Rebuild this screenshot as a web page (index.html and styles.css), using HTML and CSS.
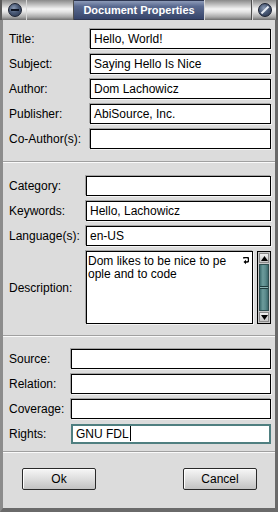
FILE: index.html
```html
<!DOCTYPE html>
<html lang="en">
<head>
  <meta charset="UTF-8">
  <title>Document Properties</title>
  <link rel="stylesheet" href="styles.css">
</head>
<body>
  <div class="window">
    <!-- Title bar -->
    <div class="titlebar">
      <div class="tb-cell tb-left">
        <span class="tb-button"><span class="tb-minus"></span></span>
      </div>
      <div class="tb-cell tb-fill"></div>
      <div class="tb-title">Document Properties</div>
      <div class="tb-cell tb-fill tb-fill-right"></div>
      <div class="tb-cell tb-right">
        <span class="tb-button"><span class="tb-slash"></span></span>
      </div>
    </div>

    <div class="content">
      <!-- General -->
      <div class="section section-general">
        <span class="label">Title:</span>
        <div class="field">Hello, World!</div>
        <span class="label">Subject:</span>
        <div class="field">Saying Hello Is Nice</div>
        <span class="label">Author:</span>
        <div class="field">Dom Lachowicz</div>
        <span class="label">Publisher:</span>
        <div class="field">AbiSource, Inc.</div>
        <span class="label">Co-Author(s):</span>
        <div class="field"></div>
      </div>

      <div class="separator"></div>

      <!-- Summary -->
      <div class="section section-summary">
        <span class="label">Category:</span>
        <div class="field"></div>
        <span class="label">Keywords:</span>
        <div class="field">Hello, Lachowicz</div>
        <span class="label">Language(s):</span>
        <div class="field">en-US</div>
        <span class="label">Description:</span>
        <div class="description">
          <div class="textarea">
            <div class="text-line">
              <span>Dom likes to be nice to pe</span>
              <svg class="wrap-mark" viewBox="0 0 6 8" width="6" height="8">
                <path d="M0.5 1.5 Q0.5 0.5 2.5 0.5 L4 0.5 Q5.5 0.5 5.5 2 L5.5 3.5 Q5.5 5 4 5 L2.5 5" fill="none" stroke="#000" stroke-width="1.4"/>
                <path d="M0.5 5 L3 2.8 L3 7.2 Z" fill="#000"/>
              </svg>
            </div>
            <div class="text-line">ople and to code</div>
          </div>
          <div class="scrollbar">
            <div class="sb-arrow">
              <svg viewBox="0 0 7 5" width="7" height="5"><path d="M3.5 0 L7 5 L0 5 Z" fill="#000"/></svg>
            </div>
            <div class="sb-thumb">
              <div class="sb-grip"></div>
            </div>
            <div class="sb-arrow">
              <svg viewBox="0 0 7 5" width="7" height="5"><path d="M0 0 L7 0 L3.5 5 Z" fill="#000"/></svg>
            </div>
          </div>
        </div>
      </div>

      <div class="separator"></div>

      <!-- Relations -->
      <div class="section section-relations">
        <span class="label">Source:</span>
        <div class="field"></div>
        <span class="label">Relation:</span>
        <div class="field"></div>
        <span class="label">Coverage:</span>
        <div class="field"></div>
        <span class="label">Rights:</span>
        <div class="field field-focused">GNU FDL<span class="caret"></span></div>
      </div>

      <div class="separator"></div>

      <!-- Buttons -->
      <div class="buttons">
        <button class="button" type="button">Ok</button>
        <button class="button" type="button">Cancel</button>
      </div>
    </div>
  </div>
</body>
</html>
```

FILE: styles.css
```css
body {
  margin: 0;
  padding: 0;
  font-family: 'Liberation Sans', Arial, sans-serif;
  font-size: 12px;
  color: #000;
  background: #dcdcdc;
}

/* Window frame */
.window {
  width: 278px;
  height: 512px;
  display: flex;
  flex-direction: column;
  background: #dcdcdc;
  overflow: hidden;
}

/* Title bar */
.titlebar {
  height: 20px;
  display: flex;
  flex-shrink: 0;
  background: linear-gradient(180deg, #8a8a8a 0%, #b8b8b8 20%, #f4f4f4 45%, #e2e2e2 60%, #a8a8a8 85%, #6e6e6e 100%);
}

.tb-cell {
  height: 100%;
  box-sizing: border-box;
}

.tb-left {
  width: 26px;
  display: flex;
  align-items: center;
  justify-content: center;
  border-left: 2px solid #5a5a5a;
  padding-left: 2px;
}

.tb-fill {
  width: 48px;
  border-left: 1px solid #d8d8d8;
  border-right: 1px solid #4e4e4e;
}

.tb-fill-right {
  width: 48px;
  border-left: 1px solid #d8d8d8;
  border-right: 1px solid #4e4e4e;
}

.tb-right {
  flex: 1;
  display: flex;
  align-items: center;
  justify-content: center;
  border-left: 1px solid #d8d8d8;
  border-right: 2px solid #5a5a5a;
}

.tb-title {
  width: 130px;
  display: flex;
  align-items: center;
  justify-content: center;
  color: #fff;
  font-weight: bold;
  font-size: 11px;
  background: linear-gradient(180deg, #8c9ab8 0%, #5a6a90 30%, #46557a 70%, #36446a 100%);
  border-top: 1px solid #2c3550;
  border-bottom: 1px solid #2c3550;
  box-sizing: border-box;
}

.tb-button {
  width: 14px;
  height: 14px;
  border-radius: 50%;
  background: radial-gradient(circle at 40% 35%, #8a9ab4 0%, #4a5a76 45%, #26324a 100%);
  border: 1px solid #1a2030;
  box-sizing: border-box;
  display: flex;
  align-items: center;
  justify-content: center;
}

.tb-minus {
  width: 8px;
  height: 2px;
  background: #0e1422;
}

.tb-slash {
  width: 2px;
  height: 10px;
  background: #e8ecf4;
  transform: rotate(45deg);
}

/* Content */
.content {
  flex: 1;
  border-left: 3px solid #8c8c8c;
  border-right: 3px solid #6a6a6a;
  border-bottom: 4px solid #6a6a6a;
  padding-right: 4px;
  display: flex;
  flex-direction: column;
}

.section {
  display: grid;
  row-gap: 5px;
  align-items: center;
  padding-left: 6px;
}

.section-general {
  grid-template-columns: 81px 1fr;
  padding-top: 9px;
  padding-bottom: 12px;
}

.section-summary {
  grid-template-columns: 77px 1fr;
  padding-top: 13px;
  padding-bottom: 11px;
}

.section-relations {
  grid-template-columns: 62px 1fr;
  padding-top: 12px;
  padding-bottom: 7px;
}

.label {
  white-space: nowrap;
}

.field {
  height: 20px;
  box-sizing: border-box;
  border: 1px solid #000;
  background: #fff;
  box-shadow: -1px -1px 0 #a4a4a4, 1px 1px 0 #f4f4f4;
  padding: 0 3px;
  line-height: 18px;
  white-space: nowrap;
  overflow: hidden;
}

.field-focused {
  border: 2px solid #4f7f80;
  box-shadow: none;
  line-height: 16px;
}

.caret {
  display: inline-block;
  width: 1px;
  height: 15px;
  background: #000;
  vertical-align: -3px;
  margin-left: 1px;
}

/* Description */
.description {
  display: flex;
  gap: 4px;
  height: 73px;
}

.textarea {
  flex: 1;
  box-sizing: border-box;
  border: 1px solid #000;
  background: #fff;
  box-shadow: -1px -1px 0 #a4a4a4, 1px 1px 0 #f4f4f4;
  padding: 3px 3px 0 1px;
  line-height: 13px;
}

.text-line {
  display: flex;
  justify-content: space-between;
  align-items: center;
  white-space: nowrap;
}

.wrap-mark {
  margin-top: -2px;
}

.scrollbar {
  width: 14px;
  box-sizing: border-box;
  border: 1px solid #000;
  background: #c8c8c8;
  display: flex;
  flex-direction: column;
  padding: 1px;
}

.sb-arrow {
  height: 10px;
  flex-shrink: 0;
  display: flex;
  align-items: center;
  justify-content: center;
  background: linear-gradient(180deg, #f0f0f0, #c4c4c4);
  border: 1px solid #8a8a8a;
  box-sizing: border-box;
}

.sb-thumb {
  flex: 1;
  margin: 1px 0;
  background: linear-gradient(90deg, #3e6e70 0%, #6c9c9c 35%, #5a8a8c 70%, #3c6a6c 100%);
  border: 1px solid #2e4e50;
  display: flex;
  align-items: center;
}

.sb-grip {
  width: 100%;
  height: 3px;
  border-top: 1px solid #1e3a3c;
  border-bottom: 1px solid #1e3a3c;
  box-sizing: border-box;
  background: #8cb4b4;
}

/* Separators */
.separator {
  height: 0;
  border-top: 1px solid #a0a0a0;
  border-bottom: 1px solid #fafafa;
  margin-right: -4px;
  flex-shrink: 0;
}

/* Buttons */
.buttons {
  display: flex;
  justify-content: space-between;
  padding: 15px 14px 0 19px;
}

.button {
  width: 74px;
  height: 22px;
  font-family: 'Liberation Sans', Arial, sans-serif;
  font-size: 12px;
  color: #000;
  border: 1px solid #2a2a2a;
  border-radius: 2px;
  background: linear-gradient(180deg, #f6f6f6 0%, #e0e0e0 45%, #c2c2c2 100%);
  box-shadow: inset 1px 1px 0 #fff;
  padding: 0;
  cursor: pointer;
}
```
